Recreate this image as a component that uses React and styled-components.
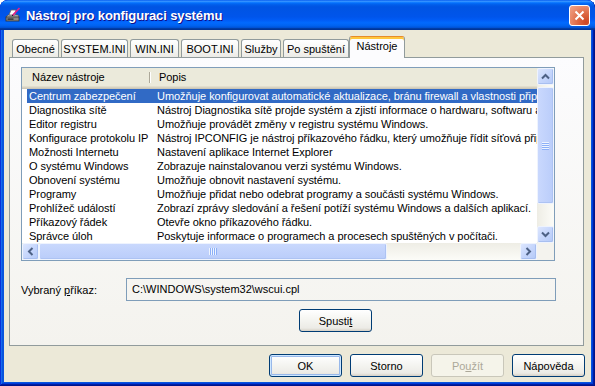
import React from 'react';
import styled, { createGlobalStyle } from 'styled-components';

const GlobalStyle = createGlobalStyle`
  html, body { margin: 0; padding: 0; background: #fff; }
  body { font-family: "Liberation Sans", Arial, sans-serif; font-size: 11px; color: #000; }
`;

const Window = styled.div`
  width: 595px;
  height: 386px;
  box-sizing: border-box;
  display: flex;
  flex-direction: column;
  background: #0855dd;
  border-radius: 8px 8px 0 0;
  overflow: hidden;
  box-shadow: inset -1px -1px #00138c, inset 1px 1px #0831d9, inset -2px -2px #001ea0,
    inset 2px 2px #166aee, inset -3px -3px #003bda, inset 3px 3px #0855dd;
`;

const TitleBar = styled.div`
  height: 30px;
  flex: none;
  display: flex;
  align-items: center;
  padding: 0 5px 0 5px;
  gap: 5px;
  border-radius: 8px 8px 0 0;
  background: linear-gradient(to bottom, #0058ee 0%, #3a93ff 4%, #288eff 6%, #127dff 8%,
    #036ffc 10%, #0262ee 14%, #0057e5 20%, #0054e3 24%, #0055eb 56%, #005bf5 66%,
    #026afe 76%, #0062ef 86%, #0052d6 92%, #0040ab 94%, #003092 100%);
`;

const TitleText = styled.div`
  flex: 1;
  color: #fff;
  font-weight: bold;
  font-size: 13px;
  letter-spacing: -0.1px;
  text-shadow: 1px 1px #0f1089;
  white-space: nowrap;
`;

const CloseButton = styled.div`
  width: 21px;
  height: 21px;
  box-sizing: border-box;
  border: 1px solid #fff;
  border-radius: 3px;
  display: flex;
  align-items: center;
  justify-content: center;
  background: radial-gradient(circle at 85% 85%, #cc4622 0%, #dc6540 35%, #e98a6b 70%, #f0a489 100%);
`;

const Body = styled.div`
  flex: 1;
  margin: 0 4px 4px 4px;
  background: #ece9d8;
  display: flex;
  flex-direction: column;
  padding: 6px 7px 0 5px;
`;

const TabStrip = styled.div`
  height: 21px;
  display: flex;
  align-items: flex-end;
  padding-left: 3px;
`;

const Tab = styled.div`
  width: ${p => p.w}px;
  height: ${p => (p.active ? 22 : 18)}px;
  box-sizing: border-box;
  margin-right: ${p => (p.active ? 0 : 2)}px;
  margin-left: ${p => (p.active ? -2 : 0)}px;
  margin-bottom: ${p => (p.active ? -1 : 0)}px;
  position: ${p => (p.active ? 'relative' : 'static')};
  z-index: ${p => (p.active ? 1 : 0)};
  border: 1px solid #919b9c;
  border-bottom: none;
  border-top: ${p => (p.active ? '1px solid #e68b2c' : '1px solid #919b9c')};
  border-radius: 3px 3px 0 0;
  background: ${p => (p.active ? '#fcfcfe' : 'linear-gradient(to bottom, #fff 0%, #f7f7f4 50%, #ecebe6 100%)')};
  box-shadow: ${p => (p.active ? 'inset 0 2px #ffc73c' : 'none')};
  display: flex;
  align-items: center;
  justify-content: center;
  padding-top: ${p => (p.active ? 0 : 1)}px;
  padding-bottom: ${p => (p.active ? 3 : 0)}px;
  white-space: nowrap;
`;

const Panel = styled.div`
  height: 289px;
  box-sizing: border-box;
  border: 1px solid #919b9c;
  background: linear-gradient(to bottom, #fcfcfe 0%, #f4f3ee 100%);
  padding: 9px 11px 0 11px;
  display: flex;
  flex-direction: column;
`;

const ListView = styled.div`
  width: 534px;
  height: 194px;
  box-sizing: border-box;
  border: 1px solid #7f9db9;
  background: #fff;
  display: grid;
  grid-template-columns: 1fr 17px;
  grid-template-rows: 1fr 17px;
`;

const ListContent = styled.div`
  overflow: hidden;
  display: flex;
  flex-direction: column;
  letter-spacing: -0.05px;
`;

const Header = styled.div`
  height: 21px;
  flex: none;
  display: flex;
  background: linear-gradient(to bottom, #ebeadb 0 18px, #e2decd 18px 19px, #d6d2c2 19px 20px, #cbc7b8 20px 21px);
`;

const HeaderCell = styled.div`
  width: ${p => (p.w ? `${p.w}px` : 'auto')};
  flex: ${p => (p.w ? 'none' : 1)};
  box-sizing: border-box;
  padding-left: ${p => p.pad}px;
  line-height: 19px;
  position: relative;
  white-space: nowrap;
  &::after {
    content: ${p => (p.divider ? "''" : 'none')};
    position: absolute;
    right: 0;
    top: 4px;
    height: 11px;
    width: 1px;
    background: #aca899;
    box-shadow: 1px 0 #fff;
  }
`;

const Row = styled.div`
  height: 14px;
  margin-left: 5px;
  display: flex;
  line-height: 14px;
  background: ${p => (p.selected ? '#316ac5' : 'transparent')};
  color: ${p => (p.selected ? '#fff' : '#000')};
  white-space: nowrap;
`;

const Cell = styled.div`
  width: ${p => (p.w ? `${p.w}px` : 'auto')};
  flex: ${p => (p.w ? 'none' : 1)};
  box-sizing: border-box;
  padding-left: ${p => p.pad}px;
  overflow: hidden;
`;

const VScroll = styled.div`
  display: flex;
  flex-direction: column;
  background: linear-gradient(to right, #eeede5, #fcfcf8);
`;

const HScroll = styled.div`
  display: flex;
  background: linear-gradient(to bottom, #eeede5, #fcfcf8);
`;

const ScrollTrack = styled.div`
  flex: 1;
  display: flex;
  flex-direction: ${p => (p.vertical ? 'column' : 'row')};
`;

const ScrollButton = styled.div`
  width: 17px;
  height: 17px;
  flex: none;
  box-sizing: border-box;
  border: 1px solid #eef3fe;
  border-radius: 2px;
  background: linear-gradient(135deg, #dce6fe 0%, #c6d6fc 50%, #b4c9f7 100%);
  box-shadow: inset -1px -1px #a8bff0;
  display: flex;
  align-items: center;
  justify-content: center;
`;

const Thumb = styled.div`
  box-sizing: border-box;
  ${p => (p.vertical
    ? `width: 17px; height: ${p.size}px; margin-top: ${p.offset}px;`
    : `height: 17px; width: ${p.size}px; margin-left: ${p.offset}px;`)}
  border: 1px solid #eef3fe;
  border-radius: 2px;
  background: ${p => (p.vertical
    ? 'linear-gradient(to right, #c9d8fd, #bacdfa)'
    : 'linear-gradient(to bottom, #c9d8fd, #bacdfa)')};
  box-shadow: inset -1px -1px #adc3f3;
  display: flex;
  align-items: center;
  justify-content: center;
`;

const Grip = styled.div`
  ${p => (p.vertical
    ? `width: 7px; height: 8px; background: repeating-linear-gradient(to bottom, #eef4fe 0 1px, #8cb0f8 1px 2px);`
    : `width: 8px; height: 7px; background: repeating-linear-gradient(to right, #eef4fe 0 1px, #8cb0f8 1px 2px);`)}
`;

const Corner = styled.div`
  background: #f4f3ee;
`;

const CommandRow = styled.div`
  display: flex;
  align-items: center;
  margin-top: 17px;
`;

const Label = styled.div`
  width: 105px;
  flex: none;
`;

const TextBox = styled.div`
  width: 430px;
  height: 23px;
  box-sizing: border-box;
  border: 1px solid #7f9db9;
  padding-left: 5px;
  line-height: 21px;
  white-space: nowrap;
`;

const RunRow = styled.div`
  display: flex;
  margin-top: 8px;
  padding-left: 278px;
`;

const Button = styled.div`
  width: 73px;
  height: 23px;
  box-sizing: border-box;
  border: 1px solid ${p => (p.disabled ? '#c9c7ba' : '#003c74')};
  border-radius: 3px;
  color: ${p => (p.disabled ? '#aca899' : '#000')};
  background: ${p => (p.disabled
    ? '#f5f4ea'
    : 'linear-gradient(to bottom, #ffffff 0%, #f4f4f0 50%, #ecebe6 86%, #d6d0c5 100%)')};
  box-shadow: ${p => (p.primary ? 'inset 0 0 0 1px #cee7ff, inset 0 0 0 2px #98b8ea' : 'none')};
  display: flex;
  align-items: center;
  justify-content: center;
`;

const Footer = styled.div`
  display: flex;
  justify-content: flex-end;
  gap: 8px;
  margin-top: 8px;
  margin-right: -1px;
`;

const Key = styled.span`
  text-decoration: underline;
`;

const rows = [
  ['Centrum zabezpečení', 'Umožňuje konfigurovat automatické aktualizace, bránu firewall a vlastnosti připojení k Internetu.'],
  ['Diagnostika sítě', 'Nástroj Diagnostika sítě projde systém a zjistí informace o hardwaru, softwaru a síťových připojeních.'],
  ['Editor registru', 'Umožňuje provádět změny v registru systému Windows.'],
  ['Konfigurace protokolu IP', 'Nástroj IPCONFIG je nástroj příkazového řádku, který umožňuje řídit síťová připojení.'],
  ['Možnosti Internetu', 'Nastavení aplikace Internet Explorer'],
  ['O systému Windows', 'Zobrazuje nainstalovanou verzi systému Windows.'],
  ['Obnovení systému', 'Umožňuje obnovit nastavení systému.'],
  ['Programy', 'Umožňuje přidat nebo odebrat programy a součásti systému Windows.'],
  ['Prohlížeč událostí', 'Zobrazí zprávy sledování a řešení potíží systému Windows a dalších aplikací.'],
  ['Příkazový řádek', 'Otevře okno příkazového řádku.'],
  ['Správce úloh', 'Poskytuje informace o programech a procesech spuštěných v počítači.'],
];

const tabs = [
  ['Obecné', 47],
  ['SYSTEM.INI', 67],
  ['WIN.INI', 49],
  ['BOOT.INI', 58],
  ['Služby', 40],
  ['Po spuštění', 66],
  ['Nástroje', 56, true],
];

const Arrow = ({ dir }) => {
  const rot = { up: 0, right: 90, down: 180, left: 270 }[dir];
  return (
    <svg width="9" height="9" viewBox="0 0 9 9" style={{ transform: `rotate(${rot}deg)` }}>
      <path d="M1 6.5 L4.5 3 L8 6.5" fill="none" stroke="#4d6185" strokeWidth="2" />
    </svg>
  );
};

const AppIcon = () => (
  <svg width="16" height="16" viewBox="0 0 16 16">
    <path d="M1 10 L3 8 L13 8 L14 10 Z" fill="#d8d8d8" stroke="#555" strokeWidth="0.8" />
    <rect x="1" y="10" width="13" height="4" fill="#8a8a8a" stroke="#333" strokeWidth="0.8" />
    <rect x="2.5" y="11.5" width="6" height="1.2" fill="#222" />
    <path d="M4 8 L6 3 L11 3 L10 8 Z" fill="#fff" stroke="#666" strokeWidth="0.8" />
    <path d="M7.5 8.5 L14.5 1" stroke="#e0208a" strokeWidth="1.8" />
    <path d="M7 9 L8 8" stroke="#222" strokeWidth="1" />
  </svg>
);

export default function App() {
  return (
    <Window>
      <GlobalStyle />
      <TitleBar>
        <AppIcon />
        <TitleText>Nástroj pro konfiguraci systému</TitleText>
        <CloseButton>
          <svg width="11" height="11" viewBox="0 0 11 11">
            <path d="M1.5 1.5 L9.5 9.5 M9.5 1.5 L1.5 9.5" stroke="#fff" strokeWidth="2" />
          </svg>
        </CloseButton>
      </TitleBar>
      <Body>
        <TabStrip>
          {tabs.map(([name, w, active]) => (
            <Tab key={name} w={w} active={active}>{name}</Tab>
          ))}
        </TabStrip>
        <Panel>
          <ListView>
            <ListContent>
              <Header>
                <HeaderCell w={128} pad={10} divider>Název nástroje</HeaderCell>
                <HeaderCell pad={9}>Popis</HeaderCell>
              </Header>
              {rows.map(([name, desc], i) => (
                <Row key={name} selected={i === 0}>
                  <Cell w={123} pad={2}>{name}</Cell>
                  <Cell pad={7}>{desc}</Cell>
                </Row>
              ))}
            </ListContent>
            <VScroll>
              <ScrollButton><Arrow dir="up" /></ScrollButton>
              <ScrollTrack vertical>
                <Thumb vertical size={117} offset={2}><Grip vertical /></Thumb>
              </ScrollTrack>
              <ScrollButton><Arrow dir="down" /></ScrollButton>
            </VScroll>
            <HScroll>
              <ScrollButton><Arrow dir="left" /></ScrollButton>
              <ScrollTrack>
                <Thumb size={348} offset={0}><Grip /></Thumb>
              </ScrollTrack>
              <ScrollButton><Arrow dir="right" /></ScrollButton>
            </HScroll>
            <Corner />
          </ListView>
          <CommandRow>
            <Label>Vybraný <Key>p</Key>říkaz:</Label>
            <TextBox>C:\WINDOWS\system32\wscui.cpl</TextBox>
          </CommandRow>
          <RunRow>
            <Button>Spusti<Key>t</Key></Button>
          </RunRow>
        </Panel>
        <Footer>
          <Button primary>OK</Button>
          <Button>Storno</Button>
          <Button disabled>Po<Key>u</Key>žít</Button>
          <Button>Nápověda</Button>
        </Footer>
      </Body>
    </Window>
  );
}
